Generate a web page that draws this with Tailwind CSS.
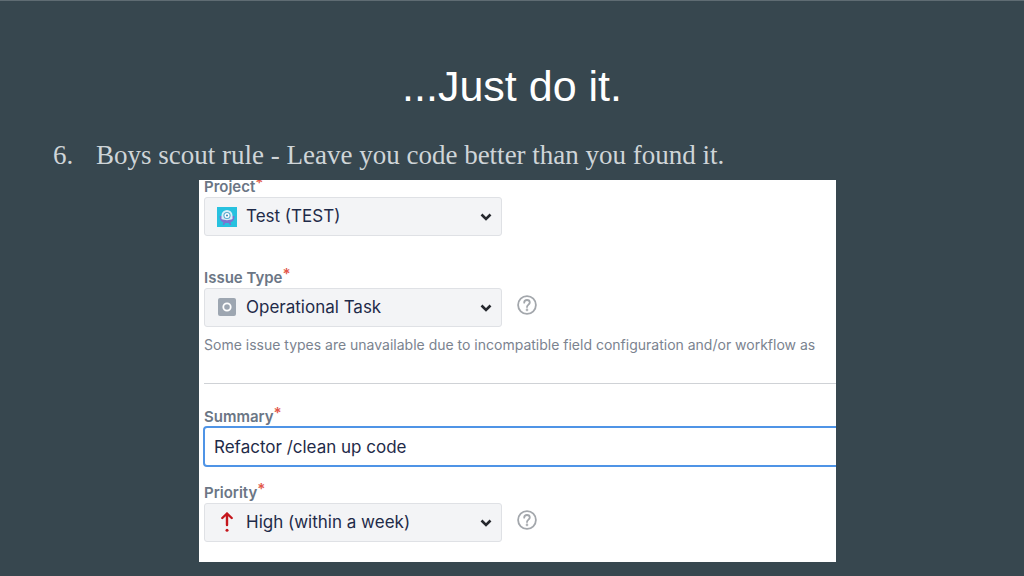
<!DOCTYPE html>
<html lang="en">

<head>
    <meta charset="UTF-8">
    <meta name="viewport" content="width=device-width, initial-scale=1.0">
    <title>...Just do it.</title>
    <script src="https://cdn.jsdelivr.net/npm/@tailwindcss/browser@4"></script>
</head>

<body class="min-h-screen bg-[#37474f] border-t border-[#5f6c73]">

    <main class="pt-[57px]">
        <h1 class="text-center text-white text-[43px] leading-[56px] font-['Liberation_Sans',Arial,sans-serif]">...Just do it.</h1>

        <ol start="6" class="mt-[25px] pl-[53px] text-[#cfd5d8] text-[27px] leading-8 font-['Liberation_Serif',serif]">
            <li class="flex"><span class="w-[43px] shrink-0">6.</span>Boys scout rule - Leave you code better than you found it.</li>
        </ol>

        <!-- Issue form -->
        <form class="mt-[9px] ml-[199px] mr-[188px] pl-[5px] pb-5 bg-white overflow-hidden font-['Inter',sans-serif] text-[#1f2b49]">
            <label for="project" class="block mb-[3px] text-[15px] leading-[14px] font-semibold text-[#6b7685]">Project<span class="relative -top-1 text-[#e2584a]">*</span></label>
            <div class="relative w-[298px]">
                <select id="project" class="block w-full h-[39px] pl-[41px] pr-8 appearance-none rounded-[3px] border border-[#dfe1e5] bg-[#f3f4f6] text-[17px]">
                    <option>Test (TEST)</option>
                </select>
                <svg class="absolute left-[13px] top-[10px] w-5 h-5 pointer-events-none" viewBox="0 0 20 20">
                    <path fill="#27c1df" d="M0 0h20v20H0z" />
                    <path fill="#7b74d0" d="M2.500 9h15c0 3.500-1.500 5.500-4 6.500l.8 2.500h-1.300l-1.200-2H8.200L7 18H5.700l.8-2.500c-2.500-1-4-3-4-6.500z" />
                    <path fill="#d9eef8" d="M4.500 12V8.500a5.500 5.500 0 0 1 11 0V12c-3 1.500-8 1.500-11 0z" />
                    <circle cx="10" cy="8.500" r="3.600" fill="#58a9cf" />
                    <circle cx="10" cy="8.500" r="2.500" fill="#fff" />
                    <circle cx="10" cy="8.500" r="1.100" fill="#4b8db8" />
                </svg>
                <svg class="absolute right-[10px] top-[16px] w-3 h-2 pointer-events-none" viewBox="0 0 12 8" fill="none" stroke="#25282d" stroke-width="2.600">
                    <path d="M1.500 1.500 6 6l4.500-4.500" />
                </svg>
            </div>

            <label for="type" class="block mt-[35px] mb-[3px] text-[15px] leading-[14px] font-semibold text-[#6b7685]">Issue Type<span class="relative -top-1 text-[#e2584a]">*</span></label>
            <div class="flex items-start gap-[15px]">
                <div class="relative w-[298px]">
                    <select id="type" class="block w-full h-[39px] pl-[41px] pr-8 appearance-none rounded-[3px] border border-[#dfe1e5] bg-[#f3f4f6] text-[17px]">
                        <option>Operational Task</option>
                    </select>
                    <svg class="absolute left-[14px] top-[10px] w-[18px] h-[18px] pointer-events-none" viewBox="0 0 18 18">
                        <rect width="18" height="18" rx="2" fill="#9da6b1" />
                        <circle cx="9" cy="9" r="3.700" fill="none" stroke="#fff" stroke-width="1.800" />
                    </svg>
                    <svg class="absolute right-[10px] top-[16px] w-3 h-2 pointer-events-none" viewBox="0 0 12 8" fill="none" stroke="#25282d" stroke-width="2.600">
                        <path d="M1.500 1.500 6 6l4.500-4.500" />
                    </svg>
                </div>
                <button type="button" aria-label="Issue type help" class="mt-[7px]">
                    <svg class="w-5 h-5" viewBox="0 0 20 20" fill="none" stroke="#a3a7ac" stroke-width="1.800" stroke-linecap="round">
                        <circle cx="10" cy="10" r="8.900" />
                        <path d="M7.200 7.700c0-1.700 1.200-2.700 2.800-2.700s2.800 1 2.800 2.500c0 2-2.800 2.200-2.800 4.500" />
                        <circle cx="10" cy="14.900" r=".4" />
                    </svg>
                </button>
            </div>
            <p class="mt-2 text-[14px] leading-5 text-[#7b838f] whitespace-nowrap">Some issue types are unavailable due to incompatible field configuration and/or workflow as</p>

            <hr class="mt-7 border-[#cfd2d6]">

            <label for="summary" class="block mt-[26px] mb-[2px] text-[15px] leading-[14px] font-semibold text-[#6b7685]">Summary<span class="relative -top-1 text-[#e2584a]">*</span></label>
            <div class="-ml-px -mr-2">
                <input id="summary" type="text" value="Refactor /clean up code" class="block w-full h-[41px] px-[9px] rounded-[4px] border-2 border-[#4f94e6] bg-white text-[17px] outline-none">
            </div>

            <label for="priority" class="block mt-[19px] mb-[3px] text-[15px] leading-[14px] font-semibold text-[#6b7685]">Priority<span class="relative -top-1 text-[#e2584a]">*</span></label>
            <div class="flex items-start gap-[15px]">
                <div class="relative w-[298px]">
                    <select id="priority" class="block w-full h-[39px] pl-[41px] pr-8 appearance-none rounded-[3px] border border-[#dfe1e5] bg-[#f3f4f6] text-[17px]">
                        <option>High (within a week)</option>
                    </select>
                    <svg class="absolute left-[17px] top-[9px] w-3 h-5 pointer-events-none" viewBox="0 0 12 20" fill="none" stroke="#c4161c" stroke-width="2.400" stroke-linecap="round" stroke-linejoin="round">
                        <path d="M6 13V1.500M1.300 6 6 1.500 10.700 6" />
                        <circle cx="6" cy="18.300" r="1.500" fill="#c4161c" stroke="none" />
                    </svg>
                    <svg class="absolute right-[10px] top-[16px] w-3 h-2 pointer-events-none" viewBox="0 0 12 8" fill="none" stroke="#25282d" stroke-width="2.600">
                        <path d="M1.500 1.500 6 6l4.500-4.500" />
                    </svg>
                </div>
                <button type="button" aria-label="Priority help" class="mt-[7px]">
                    <svg class="w-5 h-5" viewBox="0 0 20 20" fill="none" stroke="#a3a7ac" stroke-width="1.800" stroke-linecap="round">
                        <circle cx="10" cy="10" r="8.900" />
                        <path d="M7.200 7.700c0-1.700 1.200-2.700 2.800-2.700s2.800 1 2.800 2.500c0 2-2.800 2.200-2.800 4.500" />
                        <circle cx="10" cy="14.900" r=".4" />
                    </svg>
                </button>
            </div>
        </form>
    </main>

</body>

</html>
